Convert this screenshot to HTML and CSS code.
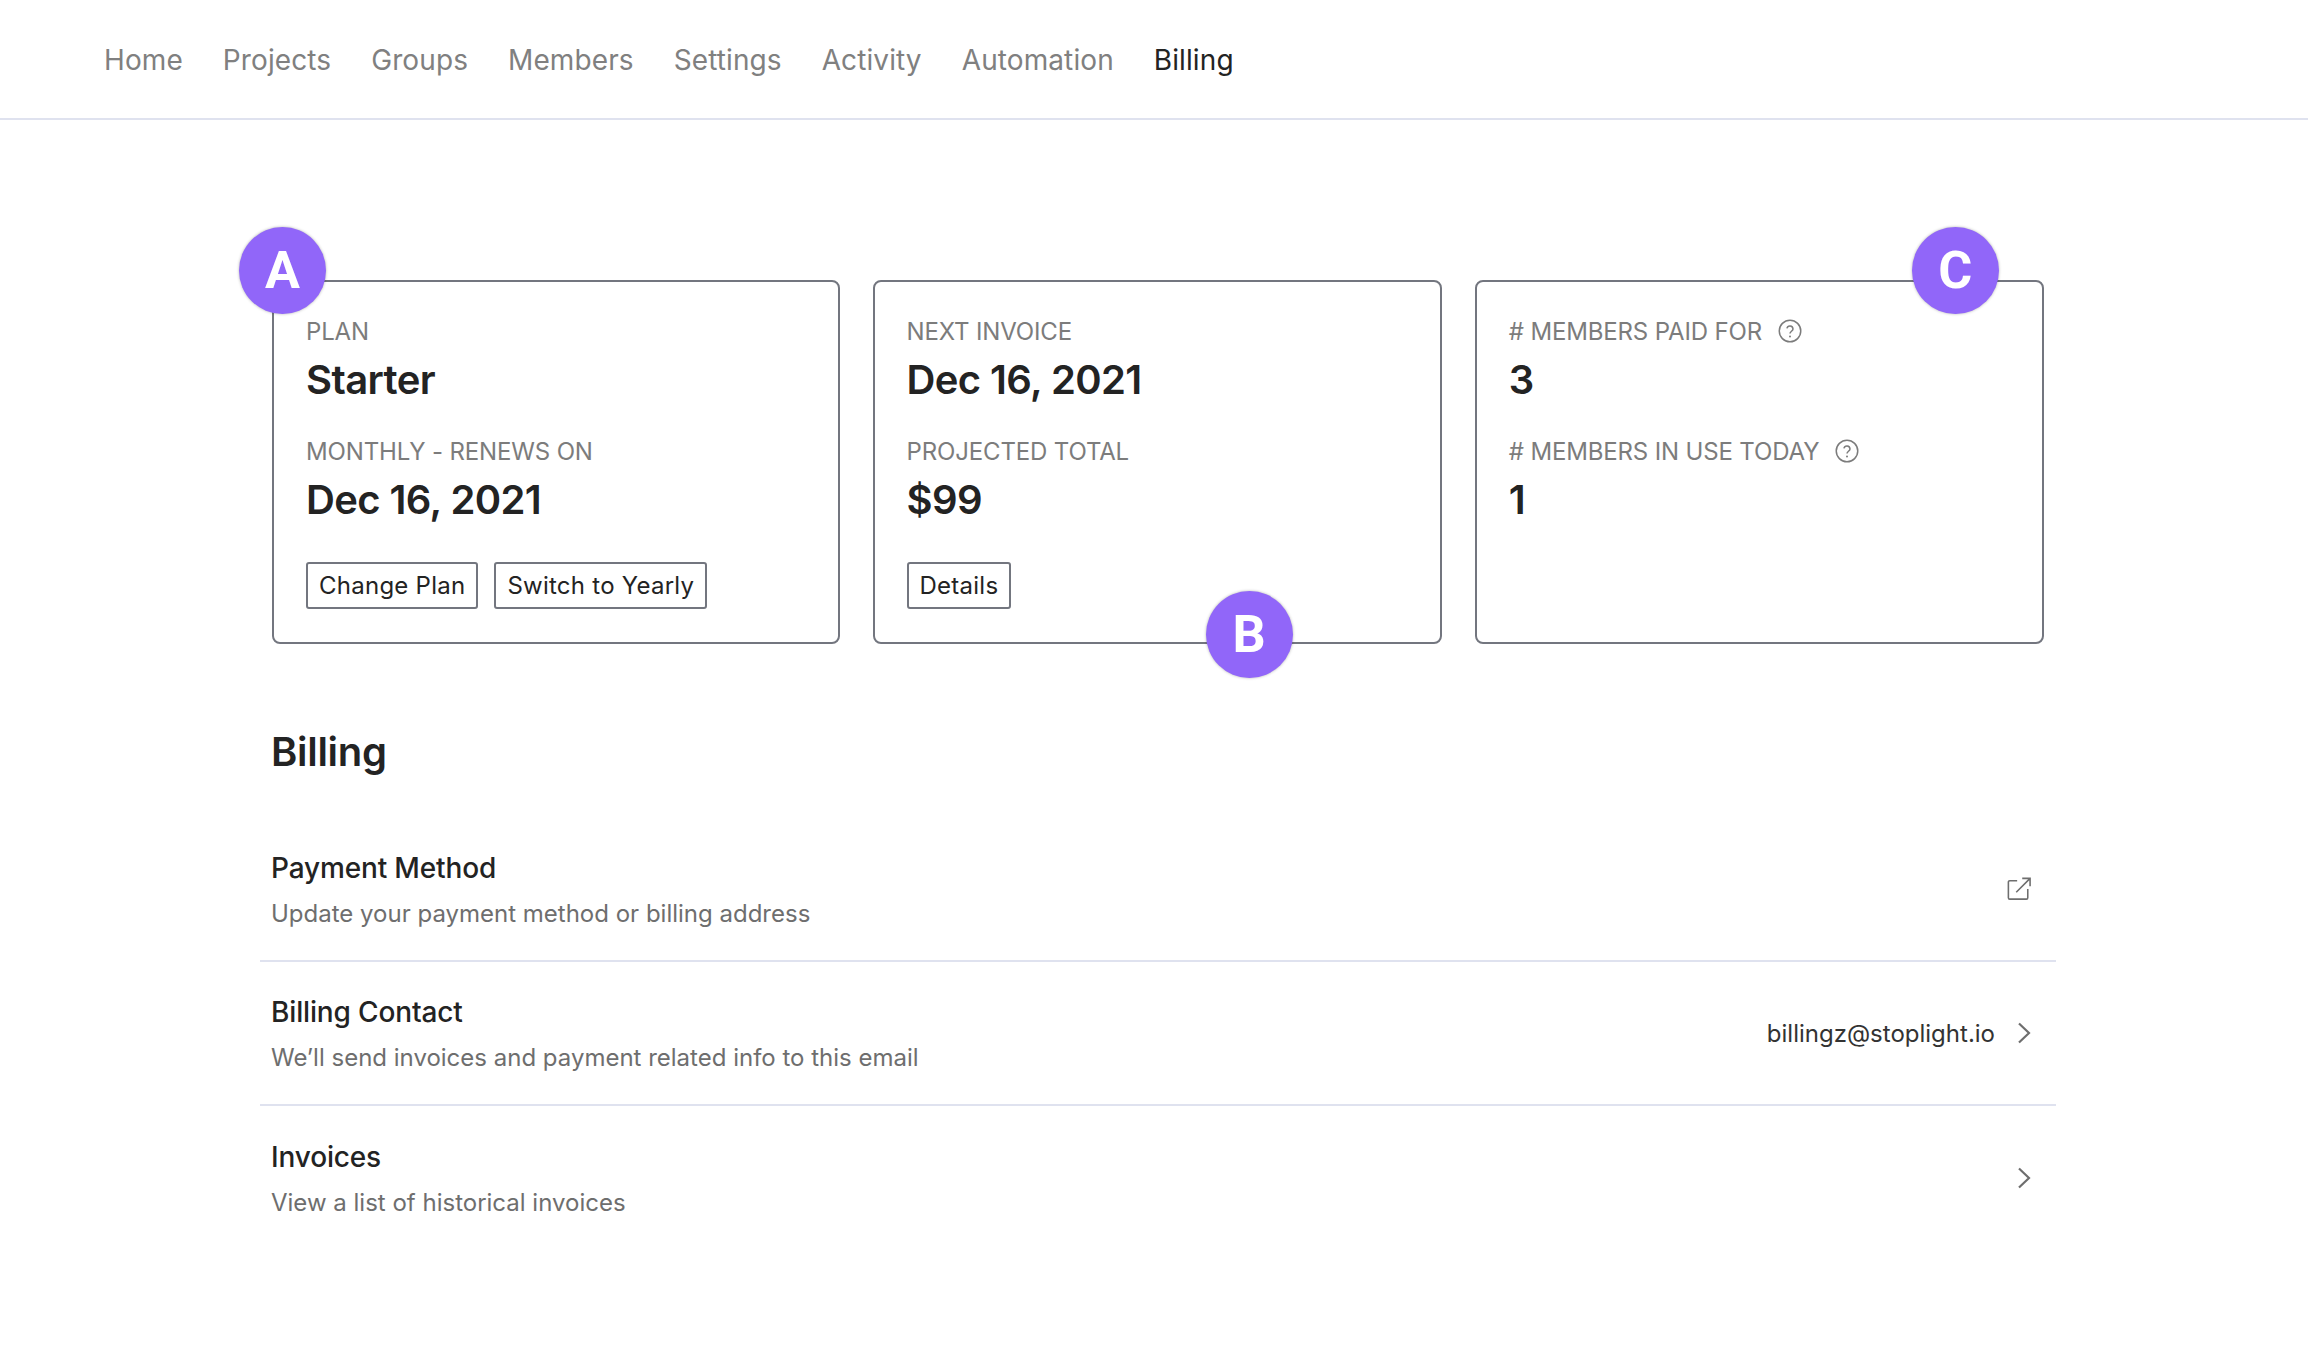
FILE: index.html
```html
<!DOCTYPE html>
<html lang="en">
<head>
    <meta charset="UTF-8">
    <meta name="viewport" content="width=device-width, initial-scale=1.0">
    <title>Billing</title>
    <link rel="stylesheet" href="styles.css">
</head>
<body>
    <nav class="topnav">
        <a href="#">Home</a>
        <a href="#">Projects</a>
        <a href="#">Groups</a>
        <a href="#">Members</a>
        <a href="#">Settings</a>
        <a href="#">Activity</a>
        <a href="#">Automation</a>
        <a href="#" class="active">Billing</a>
    </nav>

    <main class="container">
        <section class="cards">
            <div class="card">
                <span class="badge badge-a">A</span>
                <div class="stat">
                    <div class="label">PLAN</div>
                    <div class="value">Starter</div>
                </div>
                <div class="stat">
                    <div class="label">MONTHLY - RENEWS ON</div>
                    <div class="value">Dec 16, 2021</div>
                </div>
                <div class="actions">
                    <button>Change Plan</button>
                    <button>Switch to Yearly</button>
                </div>
            </div>

            <div class="card">
                <span class="badge badge-b">B</span>
                <div class="stat">
                    <div class="label">NEXT INVOICE</div>
                    <div class="value">Dec 16, 2021</div>
                </div>
                <div class="stat">
                    <div class="label">PROJECTED TOTAL</div>
                    <div class="value">$99</div>
                </div>
                <div class="actions">
                    <button>Details</button>
                </div>
            </div>

            <div class="card">
                <span class="badge badge-c">C</span>
                <div class="stat">
                    <div class="label"># MEMBERS PAID FOR
                        <svg class="help" viewBox="0 0 24 24"><circle cx="12" cy="12" r="10.75"/><path d="M8.9 9.4a3.1 3.1 0 0 1 6.1.6c0 2-3 2.500-3 4.400"/><circle class="dot" cx="12" cy="17.600" r="1"/></svg>
                    </div>
                    <div class="value">3</div>
                </div>
                <div class="stat">
                    <div class="label"># MEMBERS IN USE TODAY
                        <svg class="help" viewBox="0 0 24 24"><circle cx="12" cy="12" r="10.75"/><path d="M8.9 9.4a3.1 3.1 0 0 1 6.1.6c0 2-3 2.500-3 4.400"/><circle class="dot" cx="12" cy="17.600" r="1"/></svg>
                    </div>
                    <div class="value">1</div>
                </div>
            </div>
        </section>

        <h2>Billing</h2>

        <section class="rows">
            <div class="row">
                <div class="row-text">
                    <div class="row-title">Payment Method</div>
                    <div class="row-desc">Update your payment method or billing address</div>
                </div>
                <svg class="icon-ext" viewBox="0 0 26 26"><path d="M11 4H3a1.500 1.500 0 0 0-1.500 1.500v17A1.500 1.500 0 0 0 3 24h18a1.500 1.500 0 0 0 1.500-1.500V13"/><path d="M10 16.500 25 1.500M16.500 1.500H25V10"/></svg>
            </div>
            <div class="row">
                <div class="row-text">
                    <div class="row-title">Billing Contact</div>
                    <div class="row-desc">We’ll send invoices and payment related info to this email</div>
                </div>
                <div class="row-value">billingz@stoplight.io</div>
                <svg class="chevron" viewBox="0 0 14 22"><path d="M2 1.500 12 11 2 20.500"/></svg>
            </div>
            <div class="row">
                <div class="row-text">
                    <div class="row-title">Invoices</div>
                    <div class="row-desc">View a list of historical invoices</div>
                </div>
                <svg class="chevron" viewBox="0 0 14 22"><path d="M2 1.500 12 11 2 20.500"/></svg>
            </div>
        </section>
    </main>
</body>
</html>
```

FILE: styles.css
```css
body { margin: 0; background: #fff; color: #232323; font-family: Inter, "Liberation Sans", sans-serif; }
.topnav { display: flex; gap: 40px; height: 116px; align-items: center; padding: 2px 104px 0; border-bottom: 2px solid #dfe2ef; font-size: 28px; letter-spacing: 0.1px; }
.topnav a { color: #808080; text-decoration: none; }
.topnav a.active { color: #232323; }
.container { width: 1796px; margin: 160px 0 0 260px; }
.cards { display: grid; grid-template-columns: 567.5px 1fr 1fr; gap: 33px; padding: 0 12px; }
.card { position: relative; box-sizing: border-box; height: 364px; padding: 32px; border: 2px solid #73767f; border-radius: 8px; }
.stat { height: 120px; }
.label { display: flex; align-items: center; gap: 16px; height: 34px; font-size: 24px; letter-spacing: -0.15px; color: #7c7c7c; }
.value { margin-top: 8px; font-size: 40px; line-height: 48px; font-weight: 600; letter-spacing: -0.6px; }
.actions { display: flex; gap: 16px; margin-top: 8px; }
button { height: 47px; padding: 0 11px; background: #fff; border: 2px solid #73767f; border-radius: 3px; font: 24px Inter, "Liberation Sans", sans-serif; letter-spacing: 0.25px; color: #232323; }
.badge { position: absolute; display: flex; align-items: center; justify-content: center; width: 87px; height: 87px; border-radius: 50%; background: #9166f9; box-shadow: 0 0 3px rgba(0,0,0,0.3); color: #fff; font: 700 52px Roboto, sans-serif; }
.badge-a { left: -35px; top: -55px; }
.badge-b { left: 331px; top: 309px; }
.badge-c { left: 435px; top: -55px; }
.help { width: 24px; height: 24px; fill: none; stroke: #7c7c7c; stroke-width: 1.5; }
.help .dot { fill: #7c7c7c; stroke: none; }
h2 { margin: 84px 0 0 11px; font-size: 40px; line-height: 48px; font-weight: 600; letter-spacing: -0.3px; }
.rows { margin-top: 42px; }
.row { display: flex; align-items: center; box-sizing: border-box; height: 144px; padding: 0 25px 0 11px; border-bottom: 2px solid #dfe2ef; }
.row:last-child { border-bottom: none; }
.row-text { flex: 1; padding-top: 3px; }
.row-title { font-size: 28px; line-height: 36px; font-weight: 500; letter-spacing: -0.15px; }
.row-desc { margin-top: 11px; font-size: 24px; line-height: 34px; color: #6e6e6e; }
.row-value { margin-right: 22px; font-size: 24px; color: #333; }
.chevron { width: 14px; height: 22px; fill: none; stroke: #6e6e6e; stroke-width: 2.2; }
.icon-ext { width: 24px; height: 24px; fill: none; stroke: #6e6e6e; stroke-width: 1.7; }
```
